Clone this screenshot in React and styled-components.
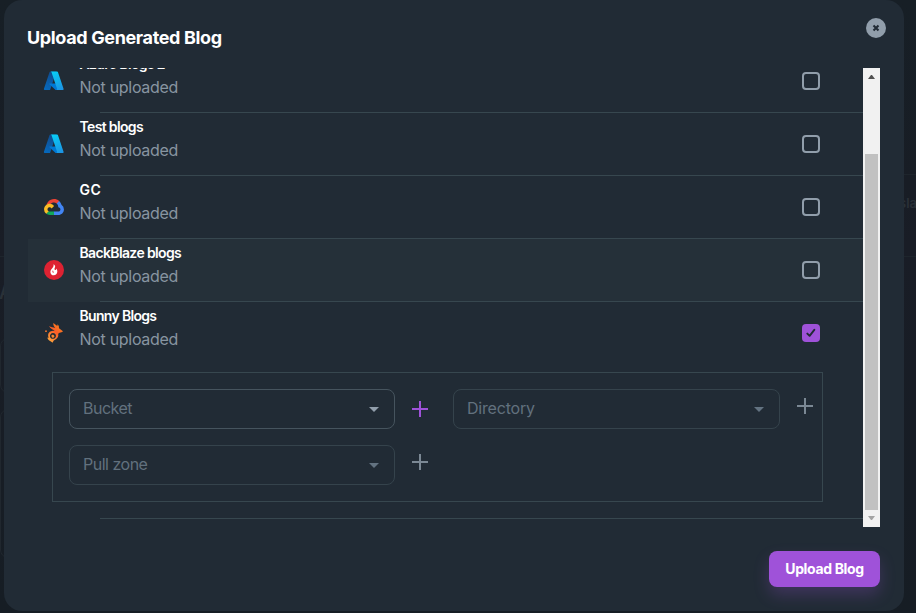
import React from 'react';
import styled, { createGlobalStyle } from 'styled-components';

const GlobalStyle = createGlobalStyle`
  * { box-sizing: border-box; }
  body {
    margin: 0;
    overflow: hidden;
    background: #161d24;
    font-family: Inter, 'Liberation Sans', sans-serif;
    color: #fff;
  }
`;

const Page = styled.div`
  position: relative;
  height: 613px;
  padding: 0 12px 2px 4px;
  overflow: hidden;
  background: linear-gradient(180deg, #171f26 0%, #181d25 30%, #191d26 40%, #161d24 100%);
`;

const BackdropPanel = styled.div`
  position: absolute;
  left: 0;
  top: ${(p) => p.$top}px;
  width: 60px;
  height: ${(p) => p.$height}px;
  border: 1px solid #20272e;
  border-radius: 8px;
`;

const BackdropLine = styled.div`
  position: absolute;
  top: ${(p) => p.$top}px;
  left: ${(p) => p.$left}px;
  width: 12px;
  height: 1px;
  background: #1e252c;
`;

const BackdropText = styled.span`
  position: absolute;
  left: ${(p) => p.$left}px;
  top: ${(p) => p.$top}px;
  font-size: ${(p) => p.$size}px;
  line-height: 18px;
  font-weight: 600;
  color: #2a3138;
`;

const Modal = styled.section`
  position: relative;
  display: flex;
  flex-direction: column;
  height: 611px;
  padding: 18px 24px 24px;
  border-radius: 18px;
  background: #212b35;
`;

const Header = styled.header`
  display: flex;
  justify-content: space-between;
  height: 50px;
  flex: none;
`;

const Title = styled.h2`
  margin: 8px 0 0 -1px;
  font-size: 18px;
  line-height: 24px;
  font-weight: 700;
  letter-spacing: -0.36px;
`;

const CloseButton = styled.button`
  display: flex;
  align-items: center;
  justify-content: center;
  width: 20px;
  height: 20px;
  margin-right: -6px;
  padding: 0;
  border: 0;
  border-radius: 50%;
  background: #919eab;
`;

const ScrollArea = styled.div`
  display: flex;
  height: 459px;
  flex: none;
  overflow: hidden;
`;

const List = styled.div`
  flex: 1;
  margin-top: -18px;
`;

const Item = styled.div`
  display: flex;
  flex-direction: column;
  background: ${(p) => (p.$hovered ? '#253039' : 'transparent')};
`;

const Row = styled.div`
  display: flex;
  align-items: flex-start;
  height: 62px;
  padding: 3px 43px 0 16px;
`;

const RowIcon = styled.span`
  display: flex;
  align-items: center;
  justify-content: center;
  width: 20px;
  height: 20px;
  margin: 18px 15.5px 0 0;

  svg { flex: none; }
`;

const RowText = styled.div`
  display: flex;
  flex: 1;
  flex-direction: column;
`;

const Name = styled.span`
  font-size: 14px;
  line-height: 22px;
  font-weight: 600;
  letter-spacing: ${(p) => p.$tracking}px;
  white-space: nowrap;
`;

const Status = styled.span`
  font-size: 16px;
  line-height: 24px;
  color: #8895a1;
  letter-spacing: -0.3px;
`;

const Divider = styled.div`
  height: 1px;
  margin-left: 72px;
  background: #37474f;
`;

const Checkbox = styled.span`
  display: flex;
  align-items: center;
  justify-content: center;
  width: 18px;
  height: 18px;
  margin-top: 19px;
  border: ${(p) => (p.$checked ? '0' : '2px solid #919eab')};
  border-radius: 4px;
  background: ${(p) => (p.$checked ? '#9f52d9' : 'transparent')};
`;

const Settings = styled.div`
  display: grid;
  grid-template-columns: 326px 58px 327px 1fr;
  grid-template-rows: 40px 40px;
  row-gap: 16px;
  width: 771px;
  height: 130px;
  margin: 8px 0 16px 24px;
  padding: 16px 0 0 16px;
  border: 1px solid #37474f;
`;

const Select = styled.div`
  display: flex;
  align-items: center;
  justify-content: space-between;
  padding: 0 15px 0 13px;
  border: 1px solid ${(p) => (p.$disabled ? '#35434c' : '#46545e')};
  border-radius: 8px;
`;

const Label = styled.span`
  padding-bottom: 2px;
  font-size: 16px;
  line-height: 24px;
  letter-spacing: ${(p) => p.$tracking}px;
  color: #62717e;
`;

const Caret = styled.span`
  border-top: 5px solid ${(p) => (p.$disabled ? '#637381' : '#919eab')};
  border-left: 5px solid transparent;
  border-right: 5px solid transparent;
`;

const AddButton = styled.button`
  justify-self: start;
  width: 16px;
  height: 16px;
  margin: ${(p) => p.$top}px 0 0 17px;
  padding: 0;
  border: 0;
  background: none;
  color: ${(p) => (p.$active ? '#9f52d9' : '#7b8894')};

  svg { display: block; }
`;

const Scrollbar = styled.div`
  display: flex;
  flex-direction: column;
  align-items: center;
  width: 17px;
  padding-top: 7px;
  background: #f1f1f1;
`;

const Thumb = styled.div`
  width: 13px;
  height: 356px;
  margin: 75px 0 6px;
  background: #c1c1c1;
`;

const Arrow = styled.svg`
  display: block;
  flex: none;
`;

const Footer = styled.footer`
  display: flex;
  justify-content: flex-end;
  padding-top: 24px;
`;

const UploadButton = styled.button`
  width: 111px;
  height: 36px;
  padding: 0 0 1px;
  border: 0;
  border-radius: 8px;
  background: #9f52d9;
  box-shadow: 0 8px 16px rgba(159, 82, 217, 0.24);
  color: #fff;
  font: 700 14px/24px Inter, sans-serif;
  letter-spacing: -0.35px;
`;

const AzureIcon = ({ id }) => (
  <svg width="21.5" height="21.5" viewBox="0 0 96 96">
    <defs>
      <linearGradient id={`${id}-left`} x1="0.6" y1="0" x2="0.2" y2="1">
        <stop stopColor="#114a8b" />
        <stop offset="1" stopColor="#0669bc" />
      </linearGradient>
      <linearGradient id={`${id}-right`} x1="0.3" y1="0" x2="0.7" y2="1">
        <stop stopColor="#08ccf5" />
        <stop offset="1" stopColor="#1c95e4" />
      </linearGradient>
    </defs>
    <path fill={`url(#${id}-left)`} d="M33.338 6.544h26.038l-27.03 80.087a4.152 4.152 0 0 1-3.933 2.824H8.149a4.145 4.145 0 0 1-3.928-5.47L29.404 9.368a4.152 4.152 0 0 1 3.934-2.825z" />
    <path fill="#0078d4" d="M71.175 60.261h-41.29a1.911 1.911 0 0 0-1.305 3.309l26.532 24.764a4.171 4.171 0 0 0 2.846 1.121h23.38z" />
    <path fill={`url(#${id}-right)`} d="M66.595 9.364a4.145 4.145 0 0 0-3.928-2.82H33.648a4.146 4.146 0 0 1 3.928 2.82l25.184 74.62a4.146 4.146 0 0 1-3.928 5.472h29.02a4.146 4.146 0 0 0 3.927-5.472z" />
  </svg>
);

const GoogleCloudIcon = () => (
  <svg width="20" height="16" viewBox="0 0 256 206">
    <path fill="#EA4335" d="M170.252 56.819l22.253-22.253 1.483-9.37C153.437-11.677 88.976-7.496 52.42 33.92 42.267 45.423 34.734 59.764 30.717 74.573l7.97-1.123 44.505-7.34 3.436-3.513c19.797-21.742 53.27-24.667 76.128-6.168l7.496.39z" />
    <path fill="#4285F4" d="M224.205 73.918a100.249 100.249 0 0 0-30.217-48.722l-31.232 31.232a55.515 55.515 0 0 1 20.379 44.037v5.544c15.35 0 27.797 12.446 27.797 27.796 0 15.352-12.446 27.573-27.797 27.573h-55.671l-5.466 5.934v33.34l5.466 5.231h55.67c39.93.311 72.553-31.494 72.864-71.424a72.303 72.303 0 0 0-31.793-60.541" />
    <path fill="#12A85A" d="M71.87 205.796h55.593V161.29H71.87a27.275 27.275 0 0 1-11.4-2.498l-7.887 2.42-22.409 22.253-1.952 7.888c12.567 9.489 27.9 14.61 43.647 14.443" />
    <path fill="#FBBC25" d="M71.87 61.425C31.94 61.663-.237 94.228.001 134.158a72.301 72.301 0 0 0 28.222 56.88l32.248-32.246c-13.99-6.322-20.208-22.786-13.887-36.776 6.32-13.99 22.786-20.208 36.775-13.888a27.796 27.796 0 0 1 13.887 13.888l32.248-32.248A72.224 72.224 0 0 0 71.87 61.425" />
  </svg>
);

const BackblazeIcon = () => (
  <svg width="20" height="20" viewBox="0 0 20 20">
    <circle cx="10" cy="10" r="10" fill="#de2232" />
    <path fill="#fff" d="M9.5 4.2c1.8 1.1 1.900 2.300 1.400 3.400-.5 1.100-.6 1.900.1 2.400.7.4 1.200-.2 1-1.400 1 .9 1.500 2.100 1.300 3.400-.2 1.900-1.600 3.300-3.500 3.300-2 0-3.400-1.500-3.400-3.400 0-1.300.6-2.200 1.400-3.100C9 7.500 9.900 6.200 9.500 4.200z" />
    <path fill="#de2232" d="M9 10.300c-.7.8-.7 1.500-.2 2.200.3.4.8.3.9-.1.1-.7-.7-1-.7-2.100z" />
  </svg>
);

const BunnyIcon = () => (
  <svg width="20" height="20" viewBox="0 0 20 20">
    <defs>
      <linearGradient id="bunny" x1="0.8" y1="0.2" x2="0.2" y2="1">
        <stop stopColor="#fb7a20" />
        <stop offset="0.35" stopColor="#fa5d28" />
        <stop offset="1" stopColor="#ffa63c" />
      </linearGradient>
    </defs>
    <path
      fill="url(#bunny)"
      fillRule="evenodd"
      d="M9.300 0.100L13.300 3 13.600 1.300 14.800 3 15 5.300C16 6 17.200 7.200 18.600 8 19 8.400 18.800 8.800 18.200 9L15 10C14.300 10.400 14.100 10.900 14.200 11.500 14.700 13.200 13.600 15 12.200 16L10.200 17.200C9.700 17.500 9.400 17.900 9.200 18.200 9.300 19.200 8.600 19.700 8 19.300 7 18.500 6 17.900 4.900 17.200 4.100 16.500 3.600 15.600 3.200 14.600L4.500 15 4.100 12.200C4.200 10.200 5.300 8.800 7 8.200 8.400 7.800 9.600 8 10.600 7.300 8.500 6.700 6.300 5.500 5.100 3 6.700 4 9 4.500 11.200 5 9.900 3.700 9.200 2 9.300 0.100zM8.800 9.900C7 10 5.800 11.700 6 13.400 6.300 15 7.800 16.100 9.400 15.800 11 15.600 12.100 14.100 11.900 12.500 11.700 10.800 10.400 9.700 8.800 9.900z"
    />
    <path fill="#fc872e" d="M7.600 12c1.200-.6 2.700 0 2.800 1.200-.1 1-.9 1.600-1.800 1.500-.9-.2-1.400-1.200-1-2.700z" />
    <circle cx="2" cy="8.200" r="0.900" fill="#f8762b" />
  </svg>
);

const PlusIcon = () => (
  <svg width="16" height="16" viewBox="0 0 16 16">
    <path fill="currentColor" d="M7 0h2v7h7v2H9v7H7V9H0V7h7z" />
  </svg>
);

const services = [
  { name: 'Azure Blogs 2', icon: <AzureIcon id="azure-a" />, tracking: -0.65 },
  { name: 'Test blogs', icon: <AzureIcon id="azure-b" />, tracking: -0.65 },
  { name: 'GC', icon: <GoogleCloudIcon />, tracking: 0.4 },
  { name: 'BackBlaze blogs', icon: <BackblazeIcon />, tracking: -0.64, hovered: true },
  { name: 'Bunny Blogs', icon: <BunnyIcon />, tracking: -0.68, checked: true },
];

const Field = ({ label, disabled, tracking }) => (
  <Select $disabled={disabled}>
    <Label $tracking={tracking}>{label}</Label>
    <Caret $disabled={disabled} />
  </Select>
);

const BucketSettings = () => (
  <Settings>
    <Field label="Bucket" tracking={-0.5} />
    <AddButton $active $top={12} aria-label="Add bucket"><PlusIcon /></AddButton>
    <Field label="Directory" disabled tracking={-0.2} />
    <AddButton $top={9} aria-label="Add directory"><PlusIcon /></AddButton>
    <Field label="Pull zone" disabled tracking={-0.5} />
    <AddButton $top={9} aria-label="Add pull zone"><PlusIcon /></AddButton>
  </Settings>
);

export default function App() {
  return (
    <Page>
      <GlobalStyle />
      <BackdropLine $top={256} $left={0} />
      <BackdropText $left={-1} $top={284} $size={18}>A</BackdropText>
      <BackdropPanel $top={338} $height={55} />
      <BackdropPanel $top={409} $height={149} />
      <BackdropText $left={899} $top={194} $size={13}>sla</BackdropText>
      <BackdropLine $top={174} $left={904} />
      <BackdropLine $top={256} $left={904} />
      <Modal>
        <Header>
          <Title>Upload Generated Blog</Title>
          <CloseButton aria-label="Close">
            <svg width="8" height="8" viewBox="0 0 8 8">
              <path d="M1.500 1.500l5 5m0-5l-5 5" stroke="#212b35" strokeWidth="2.100" />
            </svg>
          </CloseButton>
        </Header>
        <ScrollArea>
          <List>
            {services.map((s) => (
              <Item key={s.name} $hovered={s.hovered}>
                <Row>
                  <RowIcon>{s.icon}</RowIcon>
                  <RowText>
                    <Name $tracking={s.tracking}>{s.name}</Name>
                    <Status>Not uploaded</Status>
                  </RowText>
                  <Checkbox $checked={s.checked}>
                    {s.checked && (
                      <svg width="10" height="10" viewBox="0 0 10 10">
                        <path d="M1.300 5.600l2.300 2.200L8.300 1.800" fill="none" stroke="#212b35" strokeWidth="1.900" strokeLinecap="round" strokeLinejoin="round" />
                      </svg>
                    )}
                  </Checkbox>
                </Row>
                {s.checked && <BucketSettings />}
                <Divider />
              </Item>
            ))}
          </List>
          <Scrollbar>
            <Arrow width="7" height="4" viewBox="0 0 7 4"><path fill="#505050" d="M3 0h1l3 4H0z" /></Arrow>
            <Thumb />
            <Arrow width="7" height="4" viewBox="0 0 7 4"><path fill="#a3a3a3" d="M0 0h7L4 4H3z" /></Arrow>
          </Scrollbar>
        </ScrollArea>
        <Footer>
          <UploadButton>Upload Blog</UploadButton>
        </Footer>
      </Modal>
    </Page>
  );
}
